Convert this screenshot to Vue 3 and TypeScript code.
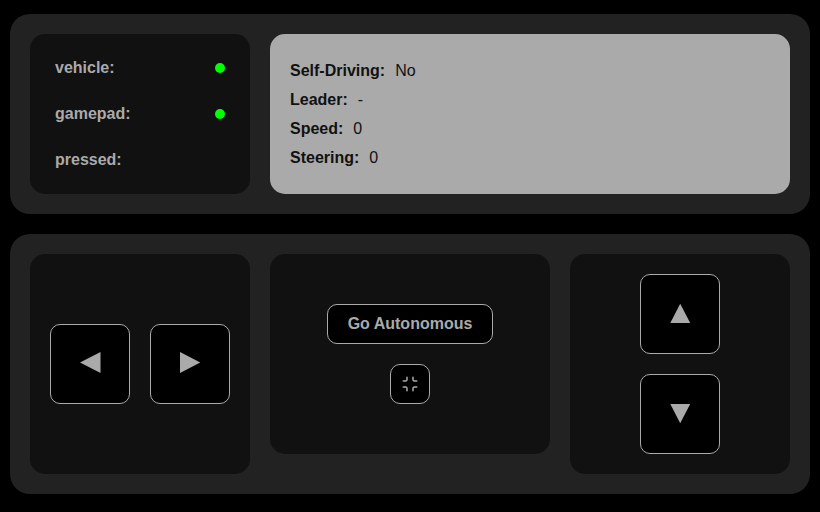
<script setup lang="ts">
interface Status {
  label: string
  online: boolean
}

interface Reading {
  label: string
  value: string
}

const statuses: Status[] = [
  { label: 'vehicle:', online: true },
  { label: 'gamepad:', online: true },
  { label: 'pressed:', online: false },
]

const readings: Reading[] = [
  { label: 'Self-Driving:', value: 'No' },
  { label: 'Leader:', value: '-' },
  { label: 'Speed:', value: '0' },
  { label: 'Steering:', value: '0' },
]
</script>

<template>
  <main class="dashboard">
    <section class="panel">
      <div class="card status">
        <div v-for="s in statuses" :key="s.label" class="status-row">
          <span>{{ s.label }}</span>
          <i v-if="s.online" class="dot"></i>
        </div>
      </div>
      <div class="card telemetry">
        <div v-for="r in readings" :key="r.label" class="reading">
          <b>{{ r.label }}</b>
          <span>{{ r.value }}</span>
        </div>
      </div>
    </section>

    <section class="panel controls">
      <div class="card steer">
        <button class="key" aria-label="Left">
          <svg viewBox="0 0 78 78"><path d="M29 37.4 49.5 27v21z" /></svg>
        </button>
        <button class="key" aria-label="Right">
          <svg viewBox="0 0 78 78"><path d="M49.3 37.4 29 27v21z" /></svg>
        </button>
      </div>
      <div class="card mode">
        <button class="go">Go Autonomous</button>
        <button class="shrink" aria-label="Exit full screen">
          <svg viewBox="0 0 24 24">
            <path d="M8 3v3a2 2 0 0 1-2 2H3m18 0h-3a2 2 0 0 1-2-2V3m0 18v-3a2 2 0 0 1 2-2h3M3 16h3a2 2 0 0 1 2 2v3" />
          </svg>
        </button>
      </div>
      <div class="card throttle">
        <button class="key" aria-label="Forward">
          <svg viewBox="0 0 78 78"><path d="M39.2 28.7 49.2 48H29.3z" /></svg>
        </button>
        <button class="key" aria-label="Backward">
          <svg viewBox="0 0 78 78"><path d="M39.2 48.3 49.2 29H29.3z" /></svg>
        </button>
      </div>
    </section>
  </main>
</template>

<style>
body {
  margin: 0;
  background: #000;
}
</style>

<style scoped>
.dashboard {
  box-sizing: border-box;
  height: 512px;
  padding: 14px 10px 18px;
  display: flex;
  flex-direction: column;
  gap: 20px;
  background: #000;
  color: #aaa;
  font: 16px/18px Arial, "Liberation Sans", sans-serif;
}
.panel {
  box-sizing: border-box;
  height: 200px;
  padding: 20px;
  display: flex;
  align-items: flex-start;
  gap: 20px;
  border-radius: 20px;
  background: #222;
}
.controls {
  height: 260px;
}
.card {
  box-sizing: border-box;
  border-radius: 15px;
  background: #111;
  display: flex;
}
.status {
  width: 220px;
  height: 160px;
  padding: 25px;
  flex-direction: column;
  justify-content: space-between;
  font-weight: bold;
}
.status-row {
  display: flex;
  align-items: center;
  justify-content: space-between;
}
.dot {
  width: 10px;
  height: 10px;
  border-radius: 50%;
  background: #0f0;
}
.telemetry {
  flex: 1;
  height: 160px;
  padding: 20px;
  flex-direction: column;
  justify-content: center;
  gap: 11px;
  background: #aaa;
  color: #111;
}
.reading {
  display: flex;
  gap: 10px;
}
.steer {
  width: 220px;
  height: 220px;
  align-items: center;
  justify-content: center;
  gap: 20px;
}
.mode {
  flex: 1;
  height: 200px;
  flex-direction: column;
  align-items: center;
  justify-content: center;
  gap: 20px;
}
.throttle {
  width: 220px;
  height: 220px;
  flex-direction: column;
  align-items: center;
  justify-content: center;
  gap: 20px;
}
button {
  box-sizing: border-box;
  margin: 0;
  padding: 0;
  border: 1px solid #aaa;
  border-radius: 10px;
  background: #000;
  color: #aaa;
  font: inherit;
}
.key {
  width: 80px;
  height: 80px;
}
.key svg {
  display: block;
  width: 78px;
  height: 78px;
  fill: #aaa;
}
.go {
  height: 40px;
  padding: 0 20px;
  font-weight: bold;
}
.shrink {
  width: 40px;
  height: 40px;
  display: flex;
  align-items: center;
  justify-content: center;
}
.shrink svg {
  width: 18px;
  height: 18px;
  fill: none;
  stroke: #aaa;
  stroke-width: 2;
  stroke-linecap: round;
  stroke-linejoin: round;
}
</style>
